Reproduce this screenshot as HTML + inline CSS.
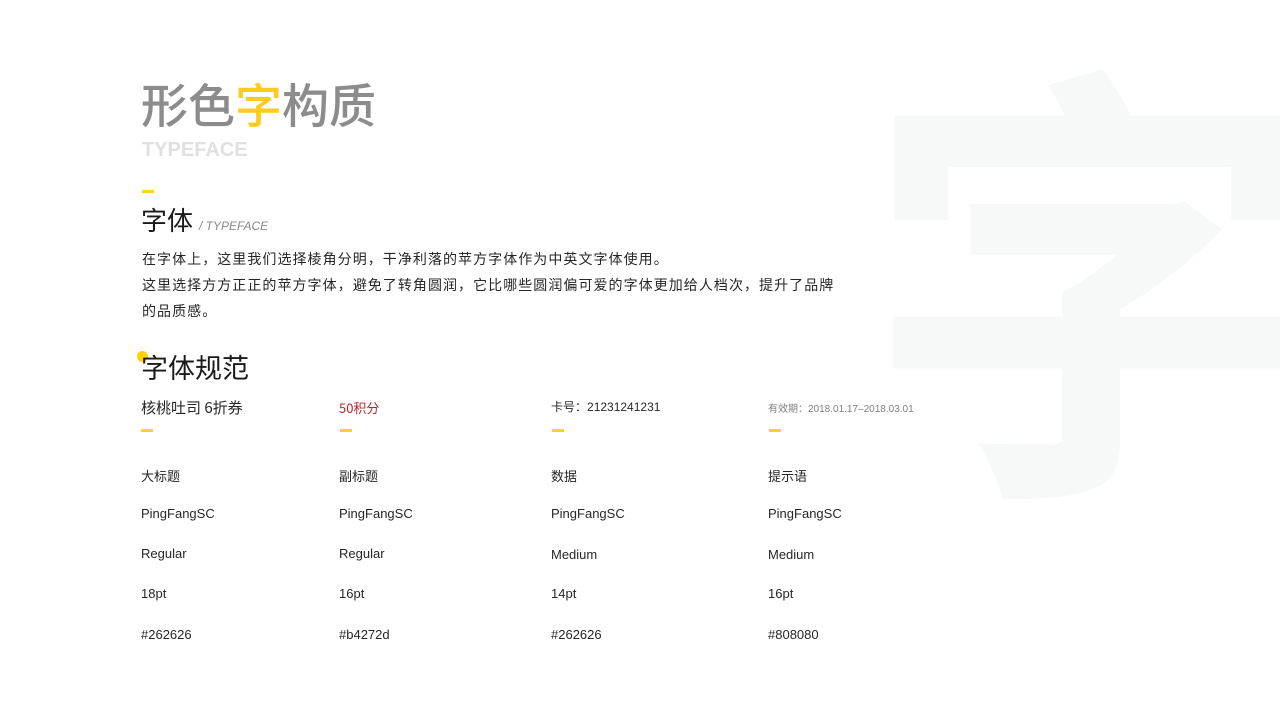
<!DOCTYPE html>
<html><head><meta charset="utf-8"><style>
html,body{margin:0;padding:0;width:1280px;height:720px;overflow:hidden;background:#fff;position:relative;font-family:"Liberation Sans","Noto Sans CJK SC",sans-serif;}
.a{position:absolute;white-space:nowrap;}
.clip{position:absolute;left:0;top:0;width:1280px;height:720px;overflow:hidden;}
.big{left:864px;top:34px;font-size:455px;line-height:1;color:#f7f8f8;font-weight:700;font-family:"Noto Sans CJK SC",sans-serif;}
.bar{position:absolute;width:12px;height:3px;background:#ffd12e;}
.cjk{font-family:"Noto Sans CJK SC",sans-serif;}
.r{font-size:13px;color:#262626;}
</style></head><body>
<div class="clip"><div class="a big">字</div></div>
<div class="a cjk" style="left:141px;top:70px;font-size:47px;line-height:66px;color:#8c8c8c;font-weight:500;">形色<span style="color:#ffcc1e">字</span>构质</div>
<div class="a" style="left:142px;top:139px;font-size:20px;font-weight:700;color:#e0e0e0;">TYPEFACE</div>
<div class="bar" style="left:142px;top:190px;"></div>
<div class="a cjk" style="left:141px;top:201px;font-size:26px;line-height:38px;color:#1a1a1a;">字体<span style="font-family:'Liberation Sans';font-style:italic;font-size:12px;color:#888;margin-left:6px;">/ TYPEFACE</span></div>
<div class="a cjk" style="left:142px;top:246px;font-size:14px;letter-spacing:1.05px;line-height:26px;color:#262626;">在字体上，这里我们选择棱角分明，干净利落的苹方字体作为中英文字体使用。<br>这里选择方方正正的苹方字体，避免了转角圆润，它比哪些圆润偏可爱的字体更加给人档次，提升了品牌<br>的品质感。</div>
<div style="position:absolute;left:137px;top:351px;width:11px;height:11px;border-radius:50%;background:#ffd400;"></div>
<div class="a cjk" style="left:141px;top:347px;font-size:27px;line-height:40px;color:#1a1a1a;">字体规范</div>
<div class="a cjk" style="left:141px;top:397px;font-size:15px;color:#262626;">核桃吐司 6折券</div>
<div class="a cjk" style="left:339px;top:398px;font-size:13px;color:#b4272d;">50积分</div>
<div class="a cjk" style="left:551px;top:398px;font-size:12px;color:#262626;">卡号：<span style="font-family:'Liberation Sans'">21231241231</span></div>
<div class="a cjk" style="left:768px;top:400px;font-size:10px;color:#808080;">有效期：<span style="font-family:'Liberation Sans'">2018.01.17–2018.03.01</span></div>
<div class="bar" style="left:141px;top:429px;"></div>
<div class="bar" style="left:340px;top:429px;"></div>
<div class="bar" style="left:552px;top:429px;"></div>
<div class="bar" style="left:769px;top:429px;"></div>
<div class="a r cjk" style="left:141px;top:466px;">大标题</div>
<div class="a r cjk" style="left:339px;top:466px;">副标题</div>
<div class="a r cjk" style="left:551px;top:466px;">数据</div>
<div class="a r cjk" style="left:768px;top:466px;">提示语</div>
<div class="a r" style="left:141px;top:506px;">PingFangSC</div>
<div class="a r" style="left:339px;top:506px;">PingFangSC</div>
<div class="a r" style="left:551px;top:506px;">PingFangSC</div>
<div class="a r" style="left:768px;top:506px;">PingFangSC</div>
<div class="a r" style="left:141px;top:546px;">Regular</div>
<div class="a r" style="left:339px;top:546px;">Regular</div>
<div class="a r" style="left:551px;top:547px;">Medium</div>
<div class="a r" style="left:768px;top:547px;">Medium</div>
<div class="a r" style="left:141px;top:586px;">18pt</div>
<div class="a r" style="left:339px;top:586px;">16pt</div>
<div class="a r" style="left:551px;top:586px;">14pt</div>
<div class="a r" style="left:768px;top:586px;">16pt</div>
<div class="a r" style="left:141px;top:627px;">#262626</div>
<div class="a r" style="left:339px;top:627px;">#b4272d</div>
<div class="a r" style="left:551px;top:627px;">#262626</div>
<div class="a r" style="left:768px;top:627px;">#808080</div>
</body></html>
